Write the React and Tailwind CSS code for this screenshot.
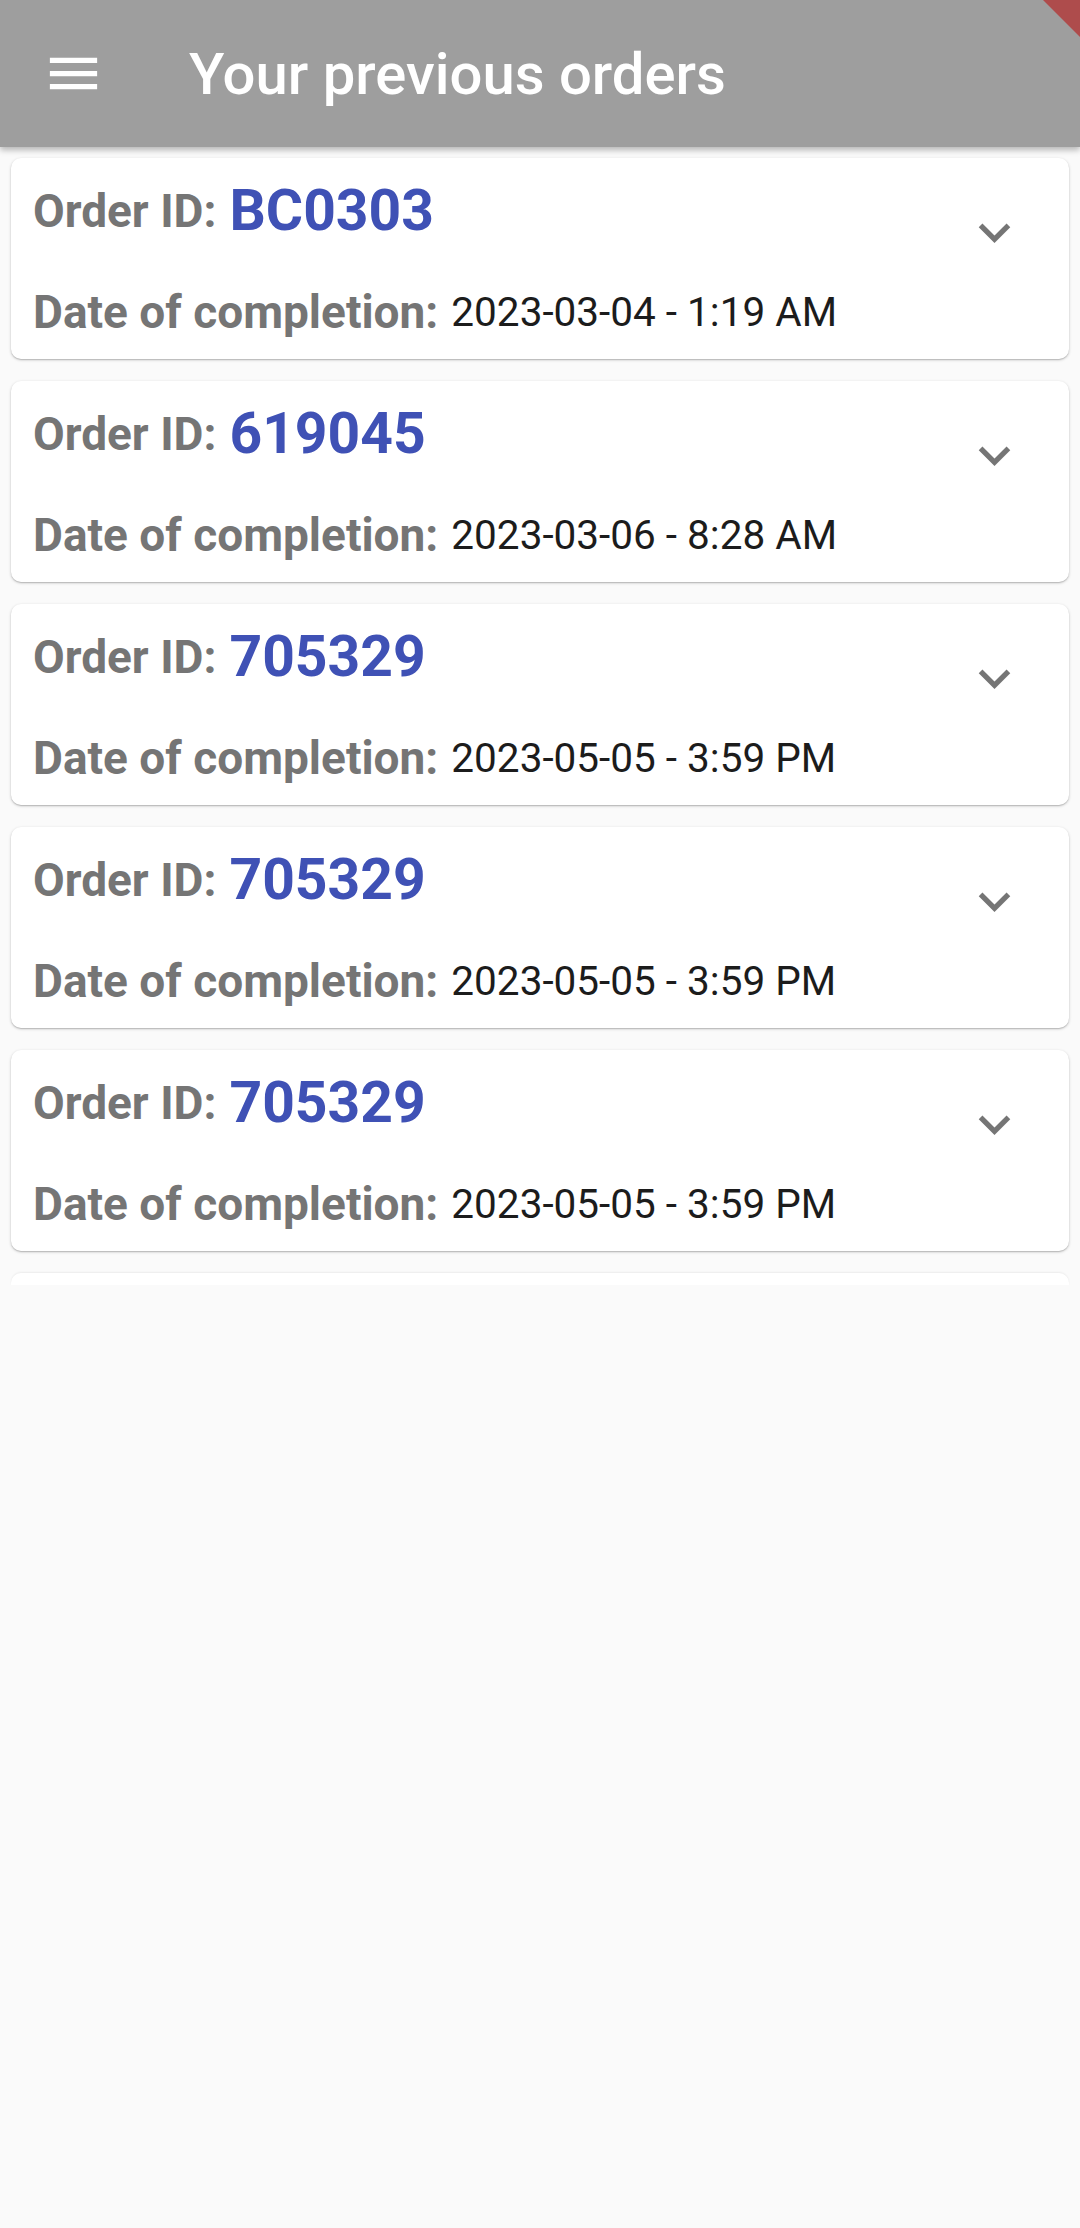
const ORDERS = [
  { id: "BC0303", date: "2023-03-04 - 1:19 AM" },
  { id: "619045", date: "2023-03-06 - 8:28 AM" },
  { id: "705329", date: "2023-05-05 - 3:59 PM" },
  { id: "705329", date: "2023-05-05 - 3:59 PM" },
  { id: "705329", date: "2023-05-05 - 3:59 PM" },
];

function MenuIcon() {
  return (
    <svg width="63" height="63" viewBox="0 0 24 24" fill="#ffffff">
      <path d="M3 18h18v-2H3v2zm0-5h18v-2H3v2zm0-7v2h18V6H3z" />
    </svg>
  );
}

function ExpandMore() {
  return (
    <svg width="63" height="63" viewBox="0 0 24 24" fill="#757575">
      <path d="M16.59 8.59 12 13.17 7.41 8.59 6 10l6 6 6-6z" />
    </svg>
  );
}

function OrderCard({ order }) {
  return (
    <div className="mx-[11px] flex h-[201px] rounded-[10px] bg-white shadow-[0_1px_3px_rgba(0,0,0,0.22),0_1px_1px_rgba(0,0,0,0.12)]">
      <div className="flex flex-1 flex-col pl-[22px] pt-[23px]">
        <div className="flex h-[60px] items-center gap-[13px]">
          <span className="text-[46px] font-bold text-[#757575]">Order ID:</span>
          <span className="text-[57px] font-bold text-[#3f51b5]">{order.id}</span>
        </div>
        <div className="mt-[41px] flex h-[60px] items-center gap-[13px]">
          <span className="text-[46px] font-bold text-[#757575]">Date of completion:</span>
          <span className="text-[40.5px] text-[#1c1c1c]">{order.date}</span>
        </div>
      </div>
      <div className="mr-[43px] pt-[43px]">
        <ExpandMore />
      </div>
    </div>
  );
}

export default function App() {
  return (
    <div
      className="relative min-h-[2228px] w-full overflow-hidden bg-[#fafafa]"
      style={{ fontFamily: "Roboto, 'Noto Sans', sans-serif" }}
    >
      {/* App bar */}
      <header className="relative z-10 flex h-[147px] items-center bg-[#9e9e9e] shadow-[0_3px_6px_rgba(0,0,0,0.28)]">
        <div className="ml-[42px] flex h-[63px] w-[63px] items-center justify-center">
          <MenuIcon />
        </div>
        <h1 className="ml-[84px] text-[58px] font-medium leading-none text-white">Your previous orders</h1>
      </header>

      {/* Debug banner tip */}
      <svg className="absolute right-0 top-0 z-20" width="40" height="40" viewBox="0 0 40 40">
        <polygon points="3,0 40,0 40,37" fill="#ae4c4c" />
      </svg>

      {/* Order list */}
      <main className="flex flex-col gap-[22px] pt-[11px]">
        {ORDERS.map((order, i) => (
          <OrderCard key={i} order={order} />
        ))}
        <div className="mx-[11px] h-[12px] rounded-t-[10px] bg-white shadow-[0_-1px_2px_rgba(0,0,0,0.06)]" />
      </main>
    </div>
  );
}
